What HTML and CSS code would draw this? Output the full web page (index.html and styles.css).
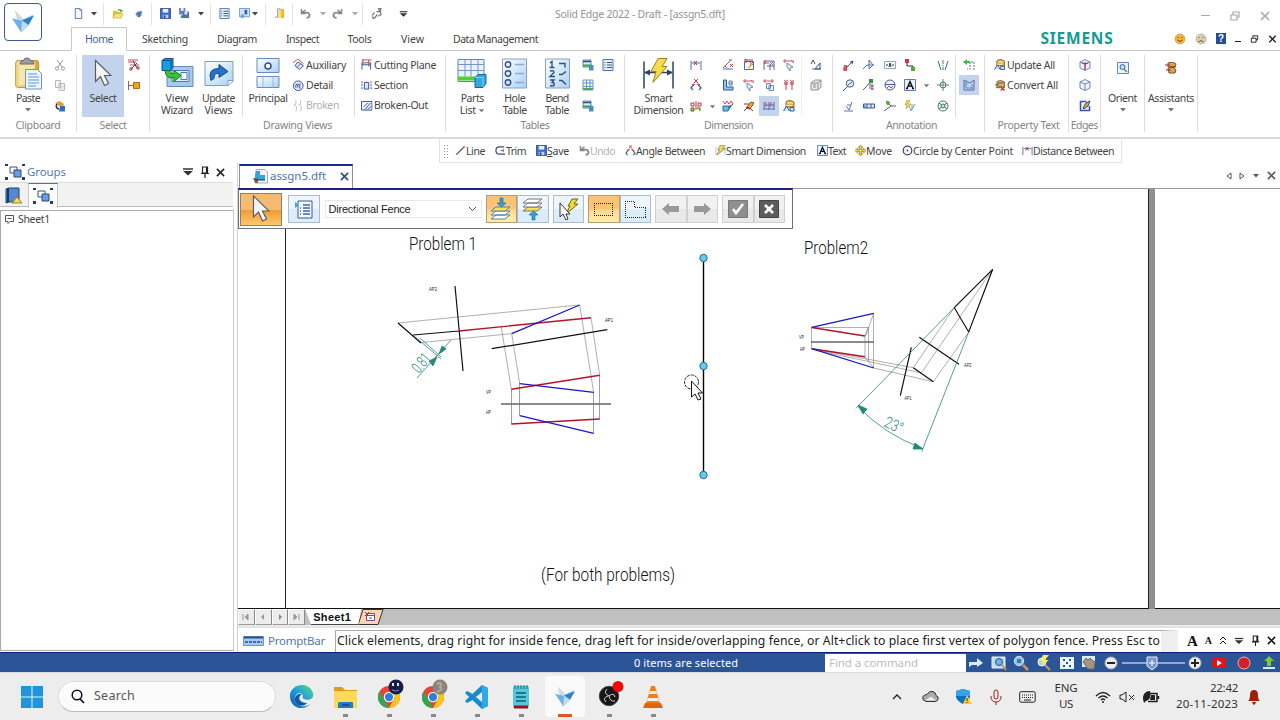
FILE: index.html
```html
<!DOCTYPE html>
<html lang="en">
<head>
<meta charset="utf-8">
<title>Solid Edge 2022 - Draft</title>
<link rel="stylesheet" href="styles.css">
</head>
<body>
<svg class="defs" width="0" height="0">
<defs>
<linearGradient id="g-blue" x1="0" y1="0" x2="1" y2="1"><stop offset="0" stop-color="#fff"/><stop offset="1" stop-color="#a9d2f3"/></linearGradient>
<linearGradient id="g-clip" x1="0" y1="0" x2="1" y2="0"><stop offset="0" stop-color="#f6df8c"/><stop offset="1" stop-color="#d3a63d"/></linearGradient>
<linearGradient id="g-edge" x1="0" y1="1" x2="1" y2="0"><stop offset="0" stop-color="#0c59a4"/><stop offset=".5" stop-color="#1b9de2"/><stop offset="1" stop-color="#5fdf78"/></linearGradient>
<symbol id="bird" viewBox="0 0 24 26"><path d="M3 0 13 10 9 25Z" fill="#d0dae2"/><path d="M0 9 12 12 10 24Z" fill="#69b1ee"/><path d="M11 11 23 5 18 17 10 24Z" fill="#8cc6f1"/><path d="M11 11 24 6 18 16Z" fill="#2f7fcb"/><path d="m11 12 7 5-8 8Z" fill="#c3dced"/></symbol>
<symbol id="down" viewBox="0 0 8 5"><path d="M1 1h6L4 4.4Z" fill="currentColor"/></symbol>
<symbol id="new" viewBox="0 0 12 12"><path d="M2.500.5h5l2 2v9h-7z" fill="#f4f9ff" stroke="#5573b5"/><path d="M7.500.5v2h2" fill="none" stroke="#5573b5"/></symbol>
<symbol id="open" viewBox="0 0 12 12"><path d="M1 3h4l1 1h4v7H1Z" fill="#e9c13f"/><path d="m3 6h9l-2 5H1Z" fill="#fbe27b" stroke="#b98a1c" stroke-width=".5"/><path d="M6 3q1-3 4-1V1l2 3H9V3Q8 2 6 3" fill="#36a536"/></symbol>
<symbol id="prev" viewBox="0 0 10 10"><path d="m1 5 3-3 5-1v6L6 9 3 8Z" fill="#6e98cd"/><path d="m3 4 3 1v4M6 5l3-3" stroke="#1e4373" fill="none"/></symbol>
<symbol id="save" viewBox="0 0 12 12"><path d="M.5.5h11v11H.5Z" fill="#3f6cc6" stroke="#33509f"/><path d="M3 1h6v4H3Z" fill="#e8effa"/><path d="M3 7.500h6V11H3Z" fill="#c0d4f3"/><path d="M4 8h2v3H4Z" fill="#23479a"/></symbol>
<symbol id="saveall" viewBox="0 0 12 12"><path d="M0 0h7v7H0Z" fill="#7385c1"/><path d="M2 0h3v3H2Z" fill="#eef"/><path d="M4 4h7v7H4Z" fill="#536eb3"/><path d="M6 4h3v3H6Z" fill="#eef"/><path d="M2 8v3h3l-1-1 2-2Z" fill="#2f9d3a"/></symbol>
<symbol id="list" viewBox="0 0 12 12"><path d="M1 .5h10v11H1Z" fill="#e3eefb" stroke="#5076ae"/><path d="M5 3.500h5M5 6h5M5 8.500h5M2.500 3.500h1M2.500 6h1M2.500 8.500h1" stroke="#35588d"/></symbol>
<symbol id="shot" viewBox="0 0 12 12"><path d="M.5.5h11v9H.5Z" fill="#cfe4fb" stroke="#6f95c9"/><path d="M6 2h3v5H6Z" fill="#2f62ad"/><path d="M2 7h4l-1 4H2Z" fill="#6aaae0"/></symbol>
<symbol id="book" viewBox="0 0 12 12"><path d="M6 1h5v10H6Z" fill="#efb62a"/><path d="M5 2h3v9H5Z" fill="#f9df70"/><path d="M1 10h3V1h3" stroke="#7f8cae" fill="none"/></symbol>
<symbol id="undo" viewBox="0 0 12 12"><path d="M1.500 5H7a3 3 0 0 1 2 5.500H7" fill="none" stroke="#85888c" stroke-width="2"/><path d="M1.500 1v5H6M2 5 6 2" stroke="#85888c" fill="none" stroke-width="1.500"/></symbol>
<symbol id="link" viewBox="0 0 12 12"><path d="m1 8 3-3M2 9v2h2l3-4M6 4h4l1 3-3 2M8 1l3-1-1 4Z" fill="none" stroke="#6f7276" stroke-width="1.300"/></symbol>
<symbol id="cut" viewBox="0 0 12 12"><path d="m3 1 5 7M9 1 4 8" stroke="#999ca0" fill="none"/><circle cx="3" cy="9.500" r="1.600" fill="none" stroke="#999ca0"/><circle cx="9" cy="9.500" r="1.600" fill="none" stroke="#999ca0"/></symbol>
<symbol id="copy" viewBox="0 0 12 12"><path d="M1.500 1.500h5v7h-5zM5 4.500h5.500v7H5z" fill="#f7f7f7" stroke="#b6b8ba"/><path d="M6.500 7h3M6.500 9h3" stroke="#c8c8c8"/></symbol>
<symbol id="brush" viewBox="0 0 12 12"><path d="m1 3 5-2 4 3-1 3-4-1Z" fill="#d9a336"/><path d="M3 4a3 3 0 0 0 2 5" stroke="#333" fill="none" stroke-width="1.500"/><path d="M6 6h5v5.500H5Z" fill="#2d72b8"/></symbol>
<symbol id="paste" viewBox="0 0 27 33"><rect x=".7" y="3.500" width="23" height="27" rx="2.500" fill="url(#g-clip)" stroke="#b99443"/><path d="M4 5h16l-1 23H4Z" fill="#f8e7ac"/><path d="M5 7q0-3 4-4 0-2 3-2t3 2q4 1 4 4Z" fill="#989da2" stroke="#686c71"/><path d="M10.500 12.500h12l4 4v15.500h-16z" fill="#ecf5ff" stroke="#7095bd"/><path d="M13 17h9M13 20h11M13 23h11M13 26h11M13 29h8" stroke="#8bb7e2" stroke-width="1.300"/></symbol>
<symbol id="cursor" viewBox="0 0 18 28"><path d="M1.500 1v21l5-5 4 9 4-2-4-8h6.500Z" fill="#f4f5f6" stroke="#5a5e63" stroke-width="1.200"/></symbol>
<symbol id="selred" viewBox="0 0 12 12"><path d="M0 1h10M0 3h8M2 6h9" stroke="#bd4c58"/><path d="m5 2 4 7M9 4 3 10" stroke="#3d4654"/><circle cx="3" cy="10" r="1.200" fill="none" stroke="#a23"/><circle cx="10" cy="9" r="1.200" fill="none" stroke="#a23"/></symbol>
<symbol id="selbox" viewBox="0 0 12 12"><path d="M.5 2v9M1 6.500h5" stroke="#a85a42"/><path d="M5.500 3.500h6v6h-6z" fill="#f4a11d" stroke="#b4691a"/></symbol>
<symbol id="wizard" viewBox="0 0 33 30"><path d="M6 8h26v20H6Z" fill="#a7cbed" stroke="#6587b9"/><path d="M11 12h17v11H11Z" fill="#deedfb" stroke="#5078b5"/><path d="M20 14h6v7h-6Z" fill="#fff" stroke="#4478b9"/><path d="M1 2 4 0h8v9l-2 3H1Z" fill="#1b9ce2" stroke="#134d86"/><path d="M1 2h9v9M10 2l2-2" fill="none" stroke="#064f88"/><path d="M4 12q1 9 9 7v4l7-6-7-5v3q-4 1-5-3Z" fill="#38c732" stroke="#157b1b"/></symbol>
<symbol id="update" viewBox="0 0 30 26"><path d="M1 1h28v20l-5 4H1Z" fill="url(#g-blue)" stroke="#8499cb"/><path d="M24 25v-5h5" fill="#fff" stroke="#8499cb"/><path d="M7 20Q3 8 15 8V4l9 7-9 6v-4q-5-1-5 5Z" fill="#2871c8" stroke="#174985"/></symbol>
<symbol id="principal" viewBox="0 0 24 30"><path d="M1 0h22v14H1Z" fill="url(#g-blue)" stroke="#6d87bf"/><circle cx="12" cy="7.500" r="3" fill="#fff" stroke="#304d90" stroke-width="1.500"/><path d="M1 18h22v11H1Z" fill="url(#g-blue)" stroke="#6d87bf"/><path d="M7 18v11M17 18v11" stroke="#9ab7df"/></symbol>
<symbol id="aux" viewBox="0 0 12 12"><path d="m5 3 6 4-4 4-5-4Z" fill="#d5e5fb" stroke="#3a539b"/><path d="m0 4 5-4 6 5M4 9l4-4" fill="none" stroke="#b0525f"/></symbol>
<symbol id="detail" viewBox="0 0 12 12"><circle cx="5.500" cy="6" r="5" fill="#e8f0fb" stroke="#354f9a"/><path d="M3 8V5l2-1M5 8V5l3-1M7 9V5" stroke="#354f9a" fill="none"/></symbol>
<symbol id="broken" viewBox="0 0 12 12"><path d="M3 0v4l-2 1 3 2-1 5M8 0v4L6 5l3 2-1 5" fill="none" stroke="#c0c0c0"/></symbol>
<symbol id="cutplane" viewBox="0 0 12 12"><path d="M1 11V4h9v7M1 6h9" fill="none" stroke="#374f94"/><path d="M1 1h10M2 0v5M8 1v7" stroke="#b24e5c"/></symbol>
<symbol id="section" viewBox="0 0 12 12"><path d="M1 1.500v9M10.500 1.500v9" stroke="#34509b" stroke-dasharray="2 1"/><path d="M3.500 2.500h4.500v7H3.500z" fill="#dce6fa" stroke="#34509b"/></symbol>
<symbol id="bout" viewBox="0 0 12 12"><path d="M.5 1.500h11v9H.5Z" fill="#edf4ff" stroke="#34509b"/><path d="m4 10 6-7M3 7l4-4M7 10l4-4" stroke="#34509b"/></symbol>
<symbol id="parts" viewBox="0 0 30 30"><path d="M1 1h26v22H1Z" fill="#e8f4ff" stroke="#5c84bd"/><path d="M1 6h26M1 12h26M8 1v17M14 1v17M21 1v17" stroke="#7695c7"/><path d="M1 18h17v4H1Z" fill="#51d22c"/><path d="M18 19l3-3h8v9l-3 4h-8Z" fill="#35a7e5" stroke="#176398"/><path d="M18 19h8v9" stroke="#7bd3fa" fill="none"/></symbol>
<symbol id="hole" viewBox="0 0 25 30"><path d="M.5.5h24v29H.5Z" fill="url(#g-blue)" stroke="#86a0d0"/><g fill="none" stroke="#344d85" stroke-width="1.400"><circle cx="6" cy="6" r="2.700"/><circle cx="6" cy="15" r="2.700"/><circle cx="6" cy="24" r="2.700"/></g><path d="M13 6h9M13 15h9M13 24h9" stroke="#8aa9d2" stroke-width="1.500"/></symbol>
<symbol id="bend" viewBox="0 0 25 30"><path d="M.5.5h24v29H.5Z" fill="url(#g-blue)" stroke="#86a0d0"/><g fill="none" stroke="#344d85" stroke-width="1.400"><path d="M5 4.500 7 3v6M4.500 9h5M5 12.500q4-1 4 1.500L5 18h5M5 21.500h4L7 24q3 0 2 3l-4 .5"/><path d="M14 5h6v4M14 16h3l4-3M14 22h3l4 4"/></g></symbol>
<symbol id="tbl" viewBox="0 0 12 12"><path d="M1 1h10v10H1Z" fill="#eaf7ef" stroke="#7097c4"/><path d="M1 4h10M1 7.500h10M4.500 1v10M8 1v10" stroke="#7097c4"/><path d="M1 9h10v2H1Z" fill="#4eae54"/></symbol>
<symbol id="tblr" viewBox="0 0 12 12"><path d="M1 1h8v7H1Z" fill="#d9ebf7" stroke="#6488b0"/><path d="M1 2.500h8" stroke="#344f78" stroke-width="1.500"/><path d="M1 5.500h9v2H1Z" fill="#3fa044"/><path d="M7 6h4.500v5.500H7Z" fill="#3f91c8"/></symbol>
<symbol id="smart" viewBox="0 0 31 32"><path d="M1 4v27M30 4v27M2 15h27" stroke="#2d4269" stroke-width="1.500"/><path d="m1 15 6-3v6ZM30 15l-6-3v6Z" fill="#2d4269"/><path d="M15 1h9l-5 8h5L10 25l3-11H8Z" fill="#f6dc4a" stroke="#a57f17"/></symbol>
<symbol id="dist" viewBox="0 0 12 12"><path d="M1 2v9M11 2v9M2 4h8" stroke="#536d9c" fill="none"/><path d="m4 2 3 4M7 2 4 6" stroke="#bd3143"/></symbol>
<symbol id="angle" viewBox="0 0 12 12"><path d="m4 5-3 4 2 2M8 5l3 4-2 2" fill="none" stroke="#466398" stroke-width="1.300"/><path d="m4 0 4 4M8 0 4 4M2 6l3-1M7 5l3 1" stroke="#c53b45"/></symbol>
<symbol id="coord" viewBox="0 0 12 12"><path d="M1 3h3v3H1zM6 1v9M8 3h3v3H8z" fill="none" stroke="#bd3143"/><path d="M1 8h3v3H1zM7 8h3v3" fill="#edb92e" stroke="#3d7038"/></symbol>
<symbol id="tri" viewBox="0 0 12 12"><path d="M1 9 8 2M1 10h10" stroke="#4971ae"/><path d="m8 5 3 3M11 5 8 8M7 1h3M3 7l2 2" stroke="#d33"/></symbol>
<symbol id="dimleaf" viewBox="0 0 12 12"><path d="M1.500 2.500h9v8h-9z" fill="#f0f5fc" stroke="#496ba5"/><path d="M1 1h9M3 0v4M7 3l3 3M10 3 7 6" stroke="#b33645"/><path d="m5 8 4-4 1 1-4 5Z" fill="#edbd38"/></symbol>
<symbol id="dimbox" viewBox="0 0 12 12"><path d="M1 11V2h10v9M4 7h7M7 5v6" fill="none" stroke="#4569a5"/><path d="M1 4h5M2 1v4M7 3l3 3M10 3 7 6" stroke="#c04a58"/></symbol>
<symbol id="dimarrow" viewBox="0 0 12 12"><path d="M0 2h11M2 0v4M8 1l3 3" stroke="#c95b65"/><path d="m4 4 6 4-3 1v3L4 8Z" fill="#e4edfa" stroke="#7788a1"/></symbol>
<symbol id="copydim" viewBox="0 0 12 12"><path d="M0 2h11M2 0v4M9 0v4" stroke="#c95b65"/><path d="M3.500 4.500h4v5h-4zM6 6.500h4.500v5H6z" fill="#eef3fb" stroke="#6d87b5"/></symbol>
<symbol id="chart" viewBox="0 0 12 12"><path d="M1.500 11V1h3v7H11v3Z" fill="#93c5ec" stroke="#245d9a"/><path d="M7 2h3v4H7zM7 4h4" fill="none" stroke="#6676a5"/></symbol>
<symbol id="redpins" viewBox="0 0 12 12"><path d="M3 3v8M9 3v8M1 5h4M7 5h4" stroke="#b33d47"/><path d="m1 1 4 3M5 1 1 4M7 1l4 3M11 1 7 4" stroke="#d35560"/></symbol>
<symbol id="xband" viewBox="0 0 12 12"><path d="m1 1 2 3 2-3 2 3 2-3 2 3" fill="none" stroke="#ce4651"/><path d="M1 6h8L6 11H1Z" fill="#6bb6e7" stroke="#2b6baa"/><path d="m6 8 5-4" stroke="#444"/></symbol>
<symbol id="xbrush" viewBox="0 0 12 12"><path d="m3 8 5-6 3 1-4 6Z" fill="#e6ad36" stroke="#735b35"/><path d="M1 4h5M1 11l4-4 5 4" stroke="#9d2634" fill="none"/></symbol>
<symbol id="dimtrack" viewBox="0 0 12 12"><path d="M1 10V2M6 2v8M11 2v8M1 9h10M2 5h9" stroke="#5966a8" fill="none"/><path d="M3 2v5M8 2v5" stroke="#bb5260"/></symbol>
<symbol id="props" viewBox="0 0 12 12"><path d="m3 2 3-2 5 2v5H3Z" fill="#dfaf55" stroke="#8b6d3f"/><path d="M4 3h6M3 5.500h6" stroke="#fff0a8"/><path d="m.5 11 3-5 3 5M7 7.500h4V11H7Z" fill="#cfe3ff" stroke="#3a5788"/></symbol>
<symbol id="convert" viewBox="0 0 12 12"><path d="m3 2 3-2 5 2v5H3Z" fill="#dfaf55" stroke="#8b6d3f"/><path d="M4 3h6M2 8h5M1 5h4" stroke="#4a5e83"/><path d="m7 7 4 4M11 7l-4 4" stroke="#c62c38" stroke-width="1.300"/></symbol>
<symbol id="letter" viewBox="0 0 12 12"><path d="m1 5 2-4 2 4M5 10l5-6v6Z" fill="none" stroke="#3e4c68"/><path d="M2 10h9" stroke="#3e65b5"/></symbol>
<symbol id="box" viewBox="0 0 12 12"><path d="m1 4 4-3h6v7l-3 3H1Z" fill="#e6e6e6" stroke="#909397"/><path d="M1 4h7v7M8 4l3-3M3 6h3M3 8h3" fill="none" stroke="#909397"/></symbol>
<symbol id="leader" viewBox="0 0 12 12"><path d="m4 8 6-6-3 1M10 2 9 5" stroke="#385d9a" fill="none"/><path d="M1 7h2.500v4H1V9h2.500" stroke="#c4313e" fill="none" stroke-width="1.300"/></symbol>
<symbol id="weld" viewBox="0 0 12 12"><path d="m0 10 4-4h7M6 1v9l4-4Z" fill="#edf3ff" stroke="#5473aa"/></symbol>
<symbol id="frame" viewBox="0 0 12 12"><path d="M.5 2.500h11v7H.5Z" fill="#f6f9ff" stroke="#90a5c4"/><path d="M2 6h2M8 6h2M5 8l1-4 1 4" stroke="#333" fill="none"/></symbol>
<symbol id="connect" viewBox="0 0 12 12"><path d="M3 3v4h6v3" fill="none" stroke="#272f45"/><path d="M1 0h4v4H1Z" fill="#c43b46"/><path d="M7 8h4v4H7Z" fill="#4eae31"/></symbol>
<symbol id="centerline" viewBox="0 0 12 12"><path d="m1 2 3 9M11 2 8 11" stroke="#4169b0"/><path d="M6 1v10" stroke="#31913c" stroke-dasharray="4 1 1 1"/></symbol>
<symbol id="balloon" viewBox="0 0 12 12"><circle cx="7" cy="4.500" r="3.700" fill="#e9f2ff" stroke="#37558b"/><path d="m5 7-5 5M5 6l4-3" stroke="#37558b"/></symbol>
<symbol id="datum" viewBox="0 0 12 12"><path d="m0 11 4-4 3-4v7M8 10h3M8 7h3" fill="none" stroke="#4765a4"/><path d="M6 0h4v4H6Z" fill="#379244"/><path d="M9 5v6" stroke="#c33"/></symbol>
<symbol id="target" viewBox="0 0 12 12"><circle cx="6" cy="6" r="5" fill="#edf2ff" stroke="#455f9b"/><path d="M1 5.500h10" stroke="#455f9b"/><path d="m3 9 2-2 2 2 2-2" stroke="#bd4450" fill="none"/></symbol>
<symbol id="text" viewBox="0 0 12 12"><path d="M.5.500h11v11H.5Z" fill="#e8f1fd" stroke="#5c7db4"/><path d="m3 9.500 3-7 3 7M4 7h4M2 9.500h2M8 9.500h2" fill="none" stroke="#111" stroke-width="1.400"/></symbol>
<symbol id="centermark" viewBox="0 0 12 12"><path d="M0 6h12M6 0v12" stroke="#569654"/><circle cx="6" cy="6" r="3" fill="none" stroke="#596d98"/></symbol>
<symbol id="surface" viewBox="0 0 12 12"><path d="M1 11h9M3 6l3 4 3-8M4 5h4" fill="none" stroke="#5575ad"/></symbol>
<symbol id="fcf" viewBox="0 0 12 12"><path d="M.5 4h11v4H.5Z" fill="#dbe8fc" stroke="#365798"/><path d="M4 4v4M8 4v4M1 5l2 3" stroke="#365798"/></symbol>
<symbol id="edgec" viewBox="0 0 12 12"><path d="m0 11 7-5-5-5M6 6h6" fill="none" stroke="#4a6284"/><circle cx="4" cy="3" r="2" fill="#48ad48"/></symbol>
<symbol id="bolts" viewBox="0 0 12 12"><path d="M3 0h3L4 4h3L2 9l1-4H1Z" fill="#f2d85c" stroke="#98812a" stroke-width=".5"/><path d="m5 6 2 5 4-7M8 4v5" stroke="#6ca6a0" fill="none"/></symbol>
<symbol id="boltcircle" viewBox="0 0 12 12"><circle cx="6" cy="6" r="5" fill="none" stroke="#4b6f94"/><path d="m2 3 8 6M2 9l8-6" stroke="#467b55"/><circle cx="6" cy="6" r="2" fill="#cce1d5" stroke="#467b55"/></symbol>
<symbol id="attach" viewBox="0 0 12 12"><path d="M5 3h6v8M7 3v7H4" fill="none" stroke="#6471a6" stroke-dasharray="2 1"/><path d="M0 3 4 0v2h3v2H4v2Z" fill="#42b942"/></symbol>
<symbol id="retrieve" viewBox="0 0 12 12"><path d="M1 1v10h10V1L7 4Z" fill="none" stroke="#5966a8"/><path d="M3 3v6h6M9 5v5" stroke="#6d7fb9" fill="none"/><path d="m1 2 4 3-4 3" fill="#59b2d0"/></symbol>
<symbol id="cubeedge" viewBox="0 0 12 12"><path d="M1 3 6 .5 11 3v6l-5 2.500L1 9ZM1 3l5 2 5-2M6 5v6" fill="#edf4ff" stroke="#7087bd"/></symbol>
<symbol id="rededge" viewBox="0 0 12 12"><path d="M1 3 6 .5 11 3v6l-5 2.500L1 9ZM1 3l5 2 5-2M6 5v6" fill="#edf4ff" stroke="#7087bd"/><path d="M6 3v8M3 4l3 1 3-1" fill="none" stroke="#bd3147" stroke-width="1.200"/></symbol>
<symbol id="paint" viewBox="0 0 12 12"><path d="M1.500 1.500h6M1.500 1v9.500h9V6" fill="#eaf2ff" stroke="#3a52a8" stroke-width="1.500"/><path d="m4 8 3-5 4-2-2 5-4 3Z" fill="#e2a53b" stroke="#304a71"/></symbol>
<symbol id="orient" viewBox="0 0 12 12"><path d="M.5.5h11v11H.5Z" fill="#e9f4ff" stroke="#5f87c2"/><circle cx="5.500" cy="5" r="2.500" fill="#b9e2ff" stroke="#3269a4"/><path d="m7 7 3 3" stroke="#b0763f" stroke-width="1.500"/></symbol>
<symbol id="assist" viewBox="0 0 12 12"><path d="m3 1 5-1 3 2-1 3H3ZM3 6l5-1 3 3-1 3H4Z" fill="#d7a34a" stroke="#7b542d"/><path d="M0 3h5M1 8h5M5 5h6" stroke="#a62f32"/></symbol>
<symbol id="line" viewBox="0 0 12 12"><path d="M2 10 10 2" stroke="#4a3e56" stroke-width="1.300"/><path d="M1 10h2M9 2h2" stroke="#e68743" stroke-width="2"/></symbol>
<symbol id="trim" viewBox="0 0 12 12"><path d="M10 2H5Q1 2 1 6t4 4h6" fill="none" stroke="#3a4998" stroke-width="1.300"/><path d="M6 6h3M9 4v4" stroke="#a34c6c"/></symbol>
<symbol id="flash" viewBox="0 0 12 12"><path d="M1 2v9M11 2v9" stroke="#b3bdcc"/><path d="M6 0h5L8 4h3L2 11l3-6H3Z" fill="#eddc59" stroke="#756c40" stroke-width=".7"/></symbol>
<symbol id="move" viewBox="0 0 12 12"><path d="m6 0 2.500 2.500H7V5h2.500V3.500L12 6 9.500 8.500V7H7v2.500h1.500L6 12 3.500 9.500H5V7H2.500v1.500L0 6l2.500-2.500V5H5V2.500H3.500Z" fill="#efd847" stroke="#786c2b" stroke-width=".7"/></symbol>
<symbol id="circle" viewBox="0 0 12 12"><circle cx="6" cy="6" r="4.700" fill="none" stroke="#344279" stroke-width="1.300"/><path d="M6 5v2" stroke="#c33" stroke-width="2"/></symbol>
<symbol id="groups" viewBox="0 0 20 16"><path d="M5 3h7v6H5Z" fill="#fff" stroke="#334e81"/><path d="M9 6h7v7H9Z" fill="#6a9fdb" stroke="#264985"/><path d="M0 0h3v2H0zM17 0h3v2h-3zM0 13h3v3H0zM17 13h3v3h-3z" fill="#243b72"/></symbol>
<symbol id="library" viewBox="0 0 18 18"><path d="m1 2 3-1h10v14H4l-3 1Z" fill="#5489cb" stroke="#20427e"/><path d="M3 1v14" stroke="#17366a" stroke-width="2"/><path d="m7 16 5-6 5 6Z" fill="#f6db42" stroke="#9b8330"/></symbol>
<symbol id="pin" viewBox="0 0 10 12"><path d="M2.500 1h5v6h-5zM1 7.500h8M5 8v4M6.500 1v6" fill="none" stroke="#222" stroke-width="1.200"/></symbol>
<symbol id="menu" viewBox="0 0 12 8"><path d="M1 1h10" stroke="#333" stroke-width="1.500"/><path d="M1 3h10L6 7.500Z" fill="#333"/></symbol>
<symbol id="x" viewBox="0 0 10 10"><path d="m1 1 8 8M9 1 1 9" stroke="currentColor" stroke-width="1.700"/></symbol>
<symbol id="restore" viewBox="0 0 10 10"><path d="M1 4h6v5H1ZM3 4V1h6v5H7" fill="none" stroke="currentColor" stroke-width="1.200"/></symbol>
<symbol id="layerd" viewBox="0 0 24 24"><g fill="#fff" stroke="#5c7da7"><path d="m2 22 5-4h14l-5 4ZM2 18l5-4h14l-5 4Z"/><path d="m2 14 5-4h14l-5 4Z" fill="#ffe346"/></g><path d="M11 1h3v5h3l-4.500 4L8 6h3Z" fill="#32a0df" stroke="#25608e" stroke-width=".6"/></symbol>
<symbol id="layeru" viewBox="0 0 24 24"><g fill="#fff" stroke="#73777d"><path d="m2 14 5-4h14l-5 4Z" fill="#ffe346"/><path d="m2 10 5-4h14l-5 4ZM2 6l5-4h14l-5 4Z"/></g><path d="M11 23h3v-5h3l-4.500-4L8 18h3Z" fill="#32a0df" stroke="#25608e" stroke-width=".6"/></symbol>
<symbol id="selflash" viewBox="0 0 24 24"><path d="M16 2h6l-4 5h4L10 17l4-8h-2Z" fill="#f1da32" stroke="#6d6124"/><path d="M4 6v14l3-3 3 6 2-1-2-5h4Z" fill="#fff" stroke="#333"/></symbol>
<symbol id="chrome" viewBox="0 0 24 24"><circle cx="12" cy="12" r="12" fill="#e84436"/><path d="M1.500 6 8 16l4 8A12 12 0 0 1 1.500 6" fill="#31a653"/><path d="M12 24l6-11-2-6h7A12 12 0 0 1 12 24" fill="#fbc619"/><circle cx="12" cy="12" r="5.700" fill="#fff"/><circle cx="12" cy="12" r="4.500" fill="#307de2"/></symbol>
</defs>
</svg>

<div class="app">
<header class="head">
  <div class="logo"><svg width="24" height="26"><use href="#bird"/></svg></div>
  <div class="headmain">
    <div class="titlebar">
      <div class="quick">
        <span class="q w14"><svg><use href="#new"/></svg></span><span class="q w21"><svg class="d"><use href="#down"/></svg></span><i></i>
        <span class="q w26"><svg><use href="#open"/></svg></span><span class="q w16"><svg class="s10"><use href="#prev"/></svg></span><span class="w5"></span><i></i>
        <span class="q w26"><svg><use href="#save"/></svg></span><span class="q w12"><svg><use href="#saveall"/></svg></span><span class="q w19"><svg class="d"><use href="#down"/></svg></span><i></i>
        <span class="q w26"><svg><use href="#list"/></svg></span><span class="q w14"><svg><use href="#shot"/></svg></span><span class="q w14b"><svg class="d"><use href="#down"/></svg></span><i></i>
        <span class="q w26"><svg><use href="#book"/></svg></span><i></i>
        <span class="q w24"><svg><use href="#undo"/></svg></span><span class="q w10"><svg class="d pale"><use href="#down"/></svg></span><span class="q w20"><svg class="flip"><use href="#undo"/></svg></span><span class="q w15"><svg class="d pale"><use href="#down"/></svg></span><i></i>
        <span class="q w26"><svg><use href="#link"/></svg></span><span class="q w29"><svg class="s10"><use href="#menu"/></svg></span>
      </div>
      <div class="title"><span data-w="170">Solid Edge 2022 - Draft - [assgn5.dft]</span></div>
      <div class="winbtns"><span class="min"></span><svg><use href="#restore"/></svg><svg><use href="#x"/></svg></div>
    </div>
    <div class="tabs">
      <div class="tab home"><span data-w="28">Home</span></div>
      <div class="tab t2"><span data-w="46">Sketching</span></div>
      <div class="tab t3"><span data-w="40">Diagram</span></div>
      <div class="tab t4"><span data-w="33">Inspect</span></div>
      <div class="tab t5"><span data-w="24">Tools</span></div>
      <div class="tab t6"><span data-w="23">View</span></div>
      <div class="tab t7"><span data-w="85">Data Management</span></div>
      <div class="brand"><span data-w="73">SIEMENS</span></div>
      <div class="docbtns">
        <svg viewBox="0 0 12 12"><circle cx="6" cy="6" r="5" fill="#f1b53c" stroke="#c78f3b" stroke-width=".6"/><path d="M3.500 7q2.500 3 5 0M4 4v1M8 4v1" fill="none" stroke="#67430e"/></svg>
        <svg viewBox="0 0 12 12"><circle cx="6" cy="6" r="5" fill="#d9ceb1" stroke="#a99b7b" stroke-width=".6"/><path d="M3.500 9q2.500-3 5 0M4 4v1M8 4v1" fill="none" stroke="#65583f"/></svg>
        <span class="help">?</span><span class="min"></span><svg class="s8"><use href="#restore"/></svg><svg class="s8"><use href="#x"/></svg>
      </div>
    </div>
  </div>
</header>

<section class="ribbon">
  <div class="grp clip"><div class="body"><div class="big w56"><svg width="27" height="33"><use href="#paste"/></svg><span data-w="24">Paste</span><svg class="d"><use href="#down"/></svg></div><div class="col"><svg><use href="#cut"/></svg><svg><use href="#copy"/></svg><svg><use href="#brush"/></svg></div></div><label><span data-w="45">Clipboard</span></label></div>
  <div class="grp sel"><div class="body"><div class="big picked"><svg width="18" height="28"><use href="#cursor"/></svg><span data-w="27">Select</span></div><div class="col"><svg><use href="#selred"/></svg><svg><use href="#selbox"/></svg></div></div><label><span data-w="27">Select</span></label></div>
  <div class="grp views"><div class="body">
    <div class="big w46"><svg width="33" height="30"><use href="#wizard"/></svg><span data-w="23">View</span><span data-w="32">Wizard</span></div>
    <div class="big w46u"><svg width="30" height="26"><use href="#update"/></svg><span data-w="33">Update</span><span data-w="28">Views</span></div><i class="in"></i>
    <div class="big w49"><svg width="24" height="30"><use href="#principal"/></svg><span data-w="39">Principal</span></div>
    <div class="rows r1"><p><svg><use href="#aux"/></svg><span data-w="40">Auxiliary</span></p><p><svg><use href="#detail"/></svg><span data-w="27">Detail</span></p><p class="off"><svg><use href="#broken"/></svg><span data-w="33">Broken</span></p></div><i class="in"></i>
    <div class="rows r2"><p><svg><use href="#cutplane"/></svg><span data-w="62">Cutting Plane</span></p><p><svg><use href="#section"/></svg><span data-w="34">Section</span></p><p><svg><use href="#bout"/></svg><span data-w="54">Broken-Out</span></p></div>
  </div><label><span data-w="69">Drawing Views</span></label></div>
  <div class="grp tables"><div class="body">
    <div class="big w43"><svg width="30" height="30"><use href="#parts"/></svg><span data-w="23">Parts</span><b><span data-w="16">List</span><svg class="d"><use href="#down"/></svg></b></div>
    <div class="big w43"><svg width="25" height="30"><use href="#hole"/></svg><span data-w="21">Hole</span><span data-w="24">Table</span></div>
    <div class="big w41"><svg width="25" height="30"><use href="#bend"/></svg><span data-w="23">Bend</span><span data-w="24">Table</span></div>
    <div class="col"><svg><use href="#tblr"/></svg><svg><use href="#tbl"/></svg><svg><use href="#tblr"/></svg></div><div class="col"><svg><use href="#list"/></svg></div>
  </div><label><span data-w="29">Tables</span></label></div>
  <div class="grp dims"><div class="body">
    <div class="big w61"><svg width="31" height="32"><use href="#smart"/></svg><span data-w="28">Smart</span><span data-w="50">Dimension</span></div>
    <div class="col"><svg><use href="#dist"/></svg><svg><use href="#angle"/></svg><svg><use href="#coord"/></svg></div>
    <div class="col arrows"><u></u><u></u><svg class="d"><use href="#down"/></svg></div>
    <div class="col"><svg><use href="#tri"/></svg><svg><use href="#chart"/></svg><svg><use href="#xband"/></svg></div>
    <div class="col"><svg><use href="#dimleaf"/></svg><svg><use href="#dimarrow"/></svg><svg><use href="#xbrush"/></svg></div>
    <div class="col"><svg><use href="#dimbox"/></svg><svg><use href="#copydim"/></svg><em><svg><use href="#dimtrack"/></svg></em></div>
    <div class="col"><svg><use href="#dimarrow"/></svg><svg><use href="#redpins"/></svg><svg><use href="#props"/></svg></div><i class="in faint"></i>
    <div class="col last"><svg><use href="#letter"/></svg><svg><use href="#box"/></svg></div>
  </div><label><span data-w="49">Dimension</span></label></div>
  <div class="grp anno"><div class="body">
    <div class="col"><svg><use href="#leader"/></svg><svg><use href="#balloon"/></svg><svg><use href="#surface"/></svg></div>
    <div class="col"><svg><use href="#weld"/></svg><svg><use href="#datum"/></svg><svg><use href="#fcf"/></svg></div>
    <div class="col"><svg><use href="#frame"/></svg><svg><use href="#target"/></svg><svg><use href="#edgec"/></svg></div>
    <div class="col"><svg><use href="#connect"/></svg><svg><use href="#text"/></svg><svg><use href="#bolts"/></svg></div>
    <div class="col arrows"><u></u><svg class="d"><use href="#down"/></svg></div>
    <div class="col"><svg><use href="#centerline"/></svg><svg><use href="#centermark"/></svg><svg><use href="#boltcircle"/></svg></div><i class="in"></i>
    <div class="col last"><svg><use href="#attach"/></svg><em><svg><use href="#retrieve"/></svg></em></div>
  </div><label><span data-w="51">Annotation</span></label></div>
  <div class="grp ptext"><div class="body"><div class="rows"><p><svg><use href="#props"/></svg><span data-w="48">Update All</span></p><p><svg><use href="#convert"/></svg><span data-w="51">Convert All</span></p></div></div><label><span data-w="62">Property Text</span></label></div>
  <div class="grp edges"><div class="body"><div class="col"><svg><use href="#rededge"/></svg><svg><use href="#cubeedge"/></svg><svg><use href="#paint"/></svg></div></div><label><span data-w="27">Edges</span></label></div>
  <div class="grp orient"><div class="body"><div class="big"><svg width="12" height="12"><use href="#orient"/></svg><span data-w="29">Orient</span><svg class="d"><use href="#down"/></svg></div></div></div>
  <div class="grp assist"><div class="body"><div class="big"><svg width="12" height="12"><use href="#assist"/></svg><span data-w="46">Assistants</span><svg class="d"><use href="#down"/></svg></div></div></div>
</section>

<nav class="quickbar"><div class="qb">
  <span class="grip"></span>
  <p class="b1"><svg><use href="#line"/></svg><span data-w="19">Line</span></p><p class="b2"><svg><use href="#trim"/></svg><span data-w="20">Trim</span></p><p class="b3"><svg><use href="#save"/></svg><span data-w="22"><ins>S</ins>ave</span></p><p class="b4 off"><svg><use href="#undo"/></svg><span data-w="25">Undo</span></p><p class="b5"><svg><use href="#angle"/></svg><span data-w="69">Angle Between</span></p><p class="b6"><svg><use href="#flash"/></svg><span data-w="80">Smart Dimension</span></p><p class="b7"><svg><use href="#text"/></svg><span data-w="18">Text</span></p><p class="b8"><svg><use href="#move"/></svg><span data-w="26">Move</span></p><p class="b9"><svg><use href="#circle"/></svg><span data-w="100">Circle by Center Point</span></p><p class="b10"><svg><use href="#dist"/></svg><span data-w="81">Distance Between</span></p>
</div></nav>

<main class="work">
  <aside class="pane">
    <div class="phead"><svg width="20" height="16"><use href="#groups"/></svg><span data-w="39">Groups</span><div class="pbtn"><svg width="12" height="8"><use href="#menu"/></svg><svg width="10" height="12"><use href="#pin"/></svg><svg width="9" height="9"><use href="#x"/></svg></div></div>
    <div class="ptabs"><div class="pt"><svg width="18" height="18"><use href="#library"/></svg></div><div class="pt on"><svg width="20" height="16"><use href="#groups"/></svg></div></div>
    <div class="tree"><svg width="9" height="9" viewBox="0 0 9 9"><path d="M.5.5h8v6H5L3 8.500v-2H.5ZM2.500 3.500h4" fill="#fff" stroke="#555"/></svg><span data-w="32">Sheet1</span></div>
  </aside>
  <section class="doc">
    <div class="doctabs"><div class="dtab"><svg width="15" height="15" viewBox="0 0 15 15"><path d="M3 .5h9l2.500 2.500v11h-12Z" fill="#eef5fb" stroke="#9fb0be"/><path d="M3 2h4v4h5v5H2V7Z" fill="#29a7e0"/><path d="M0 9h5v5H2Z" fill="#7b6954"/><path d="M2 11h10" stroke="#333"/></svg><span data-w="56">assgn5.dft</span><svg class="cls" width="9" height="9"><use href="#x"/></svg></div>
      <div class="dnav"><svg width="6" height="8" viewBox="0 0 6 8"><path d="M5 1v6L1 4Z" fill="none" stroke="#555"/></svg><svg width="6" height="8" viewBox="0 0 6 8"><path d="M1 1v6l4-3Z" fill="none" stroke="#555"/></svg><svg width="8" height="5"><use href="#down"/></svg><svg width="9" height="9"><use href="#x"/></svg></div>
    </div>
    <div class="canvas">
      <svg class="drawing" width="1042" height="420" viewBox="238 189 1042 420">
        <path d="M285.500 228v381M1148.500 189v420" stroke="#222"/><path d="M1149 189h6v420h-6z" fill="#8f8f8f"/>
        <g class="cadt" stroke="none"><text x="409" y="249.500" textLength="68" lengthAdjust="spacingAndGlyphs">Problem 1</text><text x="804" y="254" textLength="64" lengthAdjust="spacingAndGlyphs">Problem2</text><text x="541" y="580.500" textLength="134" lengthAdjust="spacingAndGlyphs">(For both problems)</text></g>
        <g stroke="#8c8c8c" fill="none" stroke-width=".7"><path d="m398 323 181-18M421 342.600l90.700-9M501.300 327l10 62.300M511.700 333.700l8 50M579.700 305l14 87.500M591 317.700l8.700 57.600"/><path d="M511.500 389v35M519.500 383v33M593.500 392v41M599.500 375v44" stroke="#777"/>
        <path d="M811.500 327v22M811.700 327.500H868.500V361M865 336v21M868 327l-3 9M873.500 313v55M873.700 313.300l-8 22.700M865 357l8.700 11M811.700 348.700l101.600 19M815 350l107 23M873.700 368l59.600 13.700M992.700 269.300 922 372M954.300 307.700l-41 60M968.700 332l-35.400 49.700"/></g>
        <g stroke="#111" stroke-width="1.200" fill="none"><path d="m455 286 8 85M398 323l23 20M413 335l46-4M491.700 348.700l115.600-19M911.300 347.300l-11 48.400M919.300 337.300l39.700 27M913.300 367.700l20 14M992.700 269.300l-38.400 38.400 14.400 24.300Z"/></g>
        <path d="M501 404h110M811 342h63" stroke="#666" stroke-width="1.600"/>
        <g stroke="#b5122b" stroke-width="1.400"><path d="m459 331 132-13.300M511.300 389.300l88.400-14M511.300 424l88.400-5M811.700 327.500l53.300 8.500M811.700 348.700l53.300 8"/></g>
        <g stroke="#1818c8" stroke-width="1.300"><path d="m511.700 333.700 68-28.700M519.700 383.700l74 8.600M519.700 415.700l74 17.600M811.700 327.300l62-14M811.700 348.700l62 19.300"/></g>
        <g stroke="#27877c" fill="none" stroke-width=".8"><path d="m417 378 34-38M413 335l28 24M420 338l21 19M954.300 307.700 856 408.300M968.700 332l-47 119.700M858 406.500Q884 434 922.500 448.500"/><path d="m439 354 3-8 4 3ZM437 357l-8 4 4 5ZM858 405l9 4-4 5ZM923 449l-8-6-2 6Z" fill="#27877c"/></g>
        <g fill="#27877c"><text class="dim" transform="translate(419 374) rotate(-50)" textLength="20" lengthAdjust="spacingAndGlyphs">0.81</text><text class="dim" transform="translate(883 426) rotate(25)" font-style="italic" textLength="19" lengthAdjust="spacingAndGlyphs">23°</text></g>
        <g class="tiny"><text x="429" y="291" textLength="8" lengthAdjust="spacingAndGlyphs">AP2</text><text x="605" y="322" textLength="8" lengthAdjust="spacingAndGlyphs">AP1</text><text x="486" y="394" textLength="5" lengthAdjust="spacingAndGlyphs">VP</text><text x="486" y="414" textLength="5" lengthAdjust="spacingAndGlyphs">HP</text><text x="799" y="339" textLength="5" lengthAdjust="spacingAndGlyphs">VP</text><text x="800" y="351" textLength="5" lengthAdjust="spacingAndGlyphs">HP</text><text x="964" y="367" textLength="7.500" lengthAdjust="spacingAndGlyphs">AP2</text><text x="904.500" y="400" textLength="7" lengthAdjust="spacingAndGlyphs">AP1</text></g>
        <path d="M703.500 258v217" stroke="#000" stroke-width="1.400"/><g fill="#66c9f5" stroke="#276b8c"><circle cx="703.500" cy="258" r="3.700"/><circle cx="703.500" cy="366" r="3.700"/><circle cx="703.500" cy="475" r="3.700"/></g>
        <circle cx="691.500" cy="382" r="7" fill="none" stroke="#222" stroke-dasharray="3 1"/><path d="M691.500 381v16l3.500-3 3 6 3-1-3-6h4.500Z" fill="#fff" stroke="#111"/>
      </svg>
      <div class="cmdbar">
        <span class="cb active"><svg width="18" height="28"><use href="#cursor"/></svg></span>
        <span class="cb opt"><svg width="20" height="21" viewBox="0 0 20 21"><path d="M4 2h14v17H4Z" fill="#f0f6ff" stroke="#3b5694"/><path d="M9 6h7M9 9h7M9 12h7M9 15h7M6 9h1M6 12h1M6 15h1" stroke="#49659d" stroke-width="1.300"/><path d="m1 3 4 3-4 3Z" fill="#2fa8d9"/></svg></span>
        <span class="combo"><span data-w="82">Directional Fence</span><svg width="9" height="6" viewBox="0 0 9 6"><path d="m1 1 3.500 3.500L8 1" fill="none" stroke="#555"/></svg></span>
        <span class="pair"><span class="cb on"><svg width="24" height="24"><use href="#layerd"/></svg></span><span class="cb"><svg width="24" height="24"><use href="#layeru"/></svg></span></span>
        <span class="cb solo"><svg width="24" height="24"><use href="#selflash"/></svg></span>
        <span class="pair"><span class="cb on"><span class="fence"></span></span><span class="cb"><svg class="crisp" width="21" height="17" viewBox="0 0 21 17"><path d="M0 .5h9M9.500 1v6M10 6.500h11M20.500 7v10M0 16.500h21M.5 0v17" fill="none" stroke="#1a2a44" stroke-dasharray="1 1"/></svg></span></span>
        <span class="pair p3"><span class="cb dis"><svg width="18" height="14" viewBox="0 0 18 14"><path d="m0 7 7-6v3h10v6H7v3Z" fill="#999"/></svg></span><span class="cb dis"><svg class="flip" width="18" height="14" viewBox="0 0 18 14"><path d="m0 7 7-6v3h10v6H7v3Z" fill="#999"/></svg></span></span>
        <span class="pair p4"><span class="cb dis"><svg width="20" height="18" viewBox="0 0 20 18"><path d="M.5.5h19v17H.5Z" fill="#8f8f8f" stroke="#777"/><path d="m5 9 3 4 7-9" fill="none" stroke="#fff" stroke-width="2.600"/></svg></span><span class="cb dis"><svg width="20" height="18" viewBox="0 0 20 18"><path d="M.5.5h19v17H.5Z" fill="#5c5c5c" stroke="#444"/><path d="m6 5 8 8M14 5l-8 8" stroke="#fff" stroke-width="2.600"/></svg></span></span>
      </div>
    </div>
    <div class="sheets">
      <span class="sn"><svg viewBox="0 0 8 8"><path d="M1 1v6M6 1v6L3 4Z" fill="#999" stroke="#999"/></svg></span><span class="sn"><svg viewBox="0 0 8 8"><path d="M5 1v6L2 4Z" fill="#999"/></svg></span><span class="sn"><svg viewBox="0 0 8 8"><path d="M3 1v6l3-3Z" fill="#888"/></svg></span><span class="sn"><svg viewBox="0 0 8 8"><path d="M6 1v6M1 1v6l3-3Z" fill="#999" stroke="#999"/></svg></span>
      <div class="stab"><span data-w="38">Sheet1</span></div>
      <svg class="addtab" width="28" height="16" viewBox="0 0 28 16"><path d="M0 16 5 .5h20L20 15.500H1" fill="#fbd5b5" stroke="#333"/><path d="M8.500 4.500h8v7h-8zM9 6.500h7M11 9h3" fill="#fff" stroke="#6d4a91"/><path d="m7 3 4 4M11 3 7 7" stroke="#d22"/></svg>
    </div>
    <div class="prompt"><svg width="21" height="10" viewBox="0 0 21 10"><path d="M.5.5h20v9H.5Z" fill="#a7caf1" stroke="#6e93c1"/><path d="M1 1.500h19" stroke="#2a528f" stroke-width="2"/><path d="M2 6h17" stroke="#426ca4" stroke-width="2" stroke-dasharray="3 1"/></svg><span class="pl"><span data-w="57">PromptBar</span></span>
      <div class="ptxt"><span data-w="823">Click elements, drag right for inside fence, drag left for inside/overlapping fence, or Alt+click to place first vertex of polygon fence. Press Esc to</span></div>
      <div class="pctl"><span class="fa big1">A</span><span class="fa">A</span><svg width="8" height="9" viewBox="0 0 8 9"><path d="m1 4 3-3 3 3M1 8l3-3 3 3" fill="none" stroke="#111"/></svg><svg width="10" height="8"><use href="#menu"/></svg><svg width="9" height="11"><use href="#pin"/></svg><svg width="9" height="9"><use href="#x"/></svg></div>
    </div>
  </section>
</main>

<footer class="status"><span class="count"><span data-w="104">0 items are selected</span></span><div class="find"><span data-w="89">Find a command</span></div>
  <div class="stools">
    <svg width="16" height="12" viewBox="0 0 16 12"><path d="M1 10V5h8V1l6 5-6 4V8H4Z" fill="#d7edff"/></svg>
    <svg width="16" height="16" viewBox="0 0 16 16"><path d="M1 2h13v11H1Z" fill="#bddaf7" stroke="#e7f3ff"/><circle cx="8" cy="7" r="3.500" fill="#75aee2" stroke="#245689"/><path d="m11 10 4 5" stroke="#c98a57" stroke-width="2"/></svg>
    <svg width="16" height="16" viewBox="0 0 16 16"><circle cx="6" cy="6" r="4.700" fill="#91c5f1" stroke="#d7e8f8" stroke-width="1"/><path d="M4 4h4v4H4Z" fill="#3d77b1"/><path d="m10 10 5 5" stroke="#db9259" stroke-width="2.500"/></svg>
    <svg width="16" height="16" viewBox="0 0 16 16"><circle cx="6" cy="7" r="4" fill="#acd0ec" stroke="#f2f6fb"/><path d="M7 0h6L9 5h4L5 11l2-5H4Z" fill="#f2ed70"/><path d="m9 10 5 5" stroke="#db9259" stroke-width="2"/></svg>
    <svg width="16" height="14" viewBox="0 0 16 14"><path d="M1 1h14v12H1Z" fill="#e9f5ff"/><path d="M4 3h2v2H4zM10 3h2v2h-2zM7 6h2v2H7zM4 9h2v2H4zM10 9h2v2h-2z" fill="#27578f"/></svg>
    <svg width="16" height="15" viewBox="0 0 16 15"><path d="M1 1h13v11H1Z" fill="#dceeff"/><path d="M2 7 5 3l2 2 2-2 2 2 3 2-1 7H7Z" fill="#a5947e" stroke="#6f6961"/></svg>
    <svg width="14" height="14" viewBox="0 0 14 14"><circle cx="7" cy="7" r="6" fill="#eee" stroke="#acb5c1"/><path d="M3 7h8" stroke="#222" stroke-width="2"/></svg>
    <svg class="slider" width="63" height="16" viewBox="0 0 63 16"><path d="M0 8h63" stroke="#fff"/><path d="M25 2h10v9l-5 4-5-4Z" fill="#7997cb" stroke="#eef"/><path d="M30 5v6M27 8h6" stroke="#fff"/></svg>
    <svg width="14" height="14" viewBox="0 0 14 14"><circle cx="7" cy="7" r="6" fill="#eee" stroke="#acb5c1"/><path d="M3 7h8M7 3v8" stroke="#222" stroke-width="2"/></svg>
    <svg width="14" height="10" viewBox="0 0 14 10"><rect width="14" height="10" rx="2" fill="#e6111b"/><path d="m5 2 5 3-5 3Z" fill="#fff"/></svg>
    <svg width="14" height="14" viewBox="0 0 14 14"><circle cx="7" cy="7" r="6" fill="#d51f29" stroke="#e9b1ae"/></svg>
    <svg width="14" height="14" viewBox="0 0 14 14"><path d="m7 0 5 5H9v5H5V5H2Z" fill="#7bcb36"/><path d="M1 12h12" stroke="#dceaf6" stroke-width="2"/></svg>
  </div>
</footer>

<footer class="taskbar">
  <svg class="win" width="24" height="24" viewBox="0 0 24 24"><path d="M1 1h10.500v10.500H1zM12.500 1H23v10.500H12.500zM1 12.500h10.500V23H1zM12.500 12.500H23V23H12.500z" fill="#1c96dc"/></svg>
  <div class="search"><svg width="14" height="15" viewBox="0 0 14 15"><circle cx="6" cy="6" r="4.800" fill="none" stroke="#111" stroke-width="1.500"/><path d="m9 10 4 4" stroke="#111" stroke-width="1.700"/></svg><span data-w="41">Search</span></div>
  <div class="apps">
    <span class="app1 none"><svg width="25" height="25" viewBox="0 0 25 25"><path d="M1 13C0 0 20-4 24 9c2 6-5 8-9 6-3-1 0-3-2-5-3-3-8 1-7 6 1 5 6 7 10 6 3 0 5-2 6-3-5 8-20 7-21-6" fill="url(#g-edge)"/><path d="M6 17c-1-5 3-8 7-7-5 3-3 9 5 9-3 4-10 4-12-2" fill="#115aa7"/></svg></span>
    <span class="app1"><svg width="25" height="23" viewBox="0 0 25 23"><path d="M1 1h8l3 3h12v18H1Z" fill="#d99e17"/><path d="M1 5h23v17H1Z" fill="#ffd95a"/><path d="M5 22v-5q0-1 2-1h11q2 0 2 1v5" fill="#207ac8"/><path d="M9 19h7" stroke="#10518b" stroke-width="2"/></svg></span>
    <span class="app1"><svg width="32" height="30" viewBox="0 0 32 30"><use href="#chrome" x="5" y="6" width="22" height="24"/><circle cx="23" cy="8" r="7.500" fill="#171e46"/><path d="M19 4h2v3h-2zM24 4h2v3h-2z" fill="#dde5ff"/><path d="M19 11q4 2 7 0" fill="none" stroke="#7584bb"/></svg></span>
    <span class="app1"><svg width="32" height="30" viewBox="0 0 32 30"><use href="#chrome" x="5" y="6" width="22" height="24"/><circle cx="23" cy="8" r="7.500" fill="#8d8678"/><path d="M20 5q6-3 3 3 4 2-3 5" fill="none" stroke="#b1aa9d" stroke-width="2"/></svg></span>
    <span class="app1"><svg width="24" height="24" viewBox="0 0 24 24"><path d="m17 0 6 3v18l-6 3L2 10 0 8l2-2 4 2 11 9V7L6 16l-4 2-2-2L2 14Z" fill="#168ccf"/><path d="m17 0 6 3v18l-6 3Z" fill="#32a8e9"/></svg></span>
    <span class="app1"><svg width="18" height="25" viewBox="0 0 18 25"><rect x="1" y="2" width="16" height="22" rx="2" fill="#55c9dc"/><path d="M3 1v4M6 1v4M9 1v4M12 1v4M15 1v4" stroke="#17647e"/><path d="M4 9h10M4 13h10M4 17h10" stroke="#125e75" stroke-width="1.500"/><path d="M2 23h14" stroke="#a00e1d" stroke-width="3"/></svg></span>
    <span class="app1 cur"><svg width="20" height="24"><use href="#bird"/></svg></span>
    <span class="app1"><svg width="28" height="30" viewBox="0 0 28 30"><circle cx="14" cy="17" r="9.700" fill="#171717" stroke="#444"/><path d="M12 10q-4 4 2 7 5-4 6 1M13 17q-6 2-2 6M14 17q1 6 6 5" fill="none" stroke="#ccc" stroke-width="1"/><circle cx="23" cy="7.500" r="5.500" fill="#f00a0a"/></svg></span>
    <span class="app1"><svg width="22" height="24" viewBox="0 0 22 24"><path d="m9 1 4 0 5 18H4Z" fill="#f57d15"/><path d="m8 6h6l1 3H7ZM6 13h10l1 3H5Z" fill="#f4f4f4"/><path d="M3 18h16l2 5H1Z" fill="#e36507"/></svg></span>
  </div>
  <div class="tray">
    <svg class="y1" width="10" height="6" viewBox="0 0 10 6"><path d="m1 5 4-4 4 4" fill="none" stroke="#222" stroke-width="1.300"/></svg>
    <svg class="y2" width="17" height="13" viewBox="0 0 17 13"><path d="M4 11.500Q-.5 10 1 6.500q1-2 4-2 2-4 6-3 3 1 3 4 3 1 2 4-1 2-3 2Z" fill="#aaa" stroke="#333"/><path d="m3 10.500 6-4 5 4" fill="#eee"/></svg>
    <svg class="y3" width="17" height="17" viewBox="0 0 17 17"><path d="m8 1 7 2v6q-1 4-7 7-6-3-7-7V3Z" fill="#0870c7"/><path d="m8 1 7 2v5H1V3Z" fill="#31a5e8"/><path d="m12 7 5 9H8Z" fill="#ffc928"/><path d="M12 10v3M12 14v1" stroke="#333"/></svg>
    <svg class="y4" width="12" height="16" viewBox="0 0 12 16"><rect x="4" y="1" width="4" height="9" rx="2" fill="#f9eceb" stroke="#9c2018"/><path d="M1 7q0 6 5 6t5-6M6 13v3" fill="none" stroke="#9c2018"/></svg>
    <svg class="y5" width="17" height="12" viewBox="0 0 17 12"><rect x=".7" y=".7" width="15.500" height="10.500" rx="1.500" fill="none" stroke="#222"/><path d="M3 4h11M3 6.500h11" stroke="#222" stroke-dasharray="1 1"/><path d="M5 9h7" stroke="#222"/></svg>
    <div class="lang"><span data-w="23">ENG</span><span data-w="14">US</span></div>
    <svg class="y6" width="16" height="12" viewBox="0 0 16 12"><path d="M1 5q7-7 14 0M3.500 7q4.500-4 9 0M6 9q2-2 4 0" fill="none" stroke="#222" stroke-width="1.300"/><circle cx="8" cy="11" r="1" fill="#222"/></svg>
    <svg class="y7" width="16" height="12" viewBox="0 0 16 12"><path d="M1 4h2l4-3v10L3 8H1ZM10 4l5 5M15 4l-5 5" fill="none" stroke="#222"/></svg>
    <svg class="y8" width="17" height="14" viewBox="0 0 17 14"><path d="M6 3.500h8v8H5M15.500 6v3" fill="none" stroke="#222" stroke-width="1.500"/><path d="M0 9Q0 1 7 1q2 8-4 10L1 13Z" fill="#222"/><path d="M8 5h4v5H7Z" fill="#222"/></svg>
    <div class="clock"><span data-w="28">22:42</span><span data-w="62">20-11-2023</span></div>
    <svg class="bell" width="14" height="16" viewBox="0 0 14 16"><path d="M1 12q2-1 2-6 0-5 4-5t4 5q0 5 2 6ZM5 13h4q-1 3-2 3t-2-3" fill="#9b210c"/></svg>
  </div>
</footer>
</div>
<script src="fit.js"></script>
</body>
</html>
```
FILE: styles.css
```css
* { box-sizing: border-box; }
body { margin: 0; background: #fff; color: #444; font: 10.500px/12px "Noto Sans", "Open Sans", sans-serif; overflow: hidden; }
p { margin: 0; }
svg { display: block; flex: none; overflow: visible; }
.defs { position: absolute; }
[data-w] { display: inline-block; white-space: nowrap; }
.app { width: 1280px; height: 720px; display: flex; flex-direction: column; }
.d { width: 8px; height: 5px; color: #777; }
.flip { transform: scaleX(-1); }
.crisp { shape-rendering: crispEdges; }

/* Title and ribbon tabs */
.head { height: 51px; flex: none; display: flex; }
.logo { width: 71px; padding: 3px 0 0 4px; border-bottom: 1px solid #c6c6c6; }
.logo svg { width: 38px; height: 38px; padding: 6px; border: 1.5px solid #3d5c90; border-radius: 4px; }
.headmain { flex: 1; display: flex; flex-direction: column; }
.titlebar { height: 27px; display: flex; align-items: center; }
.quick { width: 484px; height: 26px; display: flex; align-items: center; }
.quick i { width: 1px; height: 22px; background: #e3e3e3; }
.q { display: flex; align-items: center; justify-content: center; color: #333; }
.q svg { width: 11px; height: 11px; }
.q svg.s10 { width: 9px; height: 8px; }
.q svg.d { width: 8px; height: 5px; color: #444; }
.q svg.pale { color: #aaa; }
.w5 { width: 5px; } .w10 { width: 11px; } .w12 { width: 13px; } .w14 { width: 14px; } .w14b { width: 7px; } .w15 { width: 15px; } .w16 { width: 16px; } .w19 { width: 19px; } .w20 { width: 19px; } .w21 { width: 18px; } .w24 { width: 24px; } .w26 { width: 26px; } .w29 { width: 28px; }
.q.w14b { margin: 0 7px 0 0; }
.title { flex: 1; color: #949494; }
.winbtns { display: flex; align-items: center; gap: 20px; color: #aaa; margin: 4px 10px 0 0; }
.winbtns svg { width: 10px; height: 10px; }
.winbtns .min { width: 9px; height: 1.500px; background: #aaa; }
.tabs { height: 24px; display: flex; border-bottom: 1px solid #c6c6c6; }
.tab { display: flex; justify-content: center; align-items: center; padding-top: 1px; }
.home { width: 56px; height: 24px; border: 1px solid #c6c6c6; border-bottom-color: #fff; color: #3d5f9d; padding: 0; }
.t2 { width: 76px; } .t3 { width: 68px; } .t4 { width: 63px; } .t5 { width: 51px; } .t6 { width: 55px; } .t7 { width: 111px; }
.brand { width: 76px; margin-left: 489.500px; font: bold 15.500px/22px "Noto Sans", sans-serif; color: #129c92; }
.docbtns { margin-left: 57.500px; display: flex; align-items: center; gap: 9px; color: #222; }
.docbtns svg { width: 12px; height: 12px; }
.docbtns svg.s8 { width: 9px; height: 8px; }
.docbtns .min { width: 6px; height: 1.500px; background: #222; margin-top: 6px; }
.help { width: 10px; height: 11px; background: #254e96; color: #fff; font: bold 10px/11px "Liberation Sans", sans-serif; text-align: center; }

/* Ribbon */
.ribbon { height: 88px; flex: none; display: flex; padding-top: 4px; border-bottom: 2px solid #dcdcdc; }
.grp { height: 77px; border-right: 1.500px solid #dcdcdc; display: flex; flex-direction: column; }
.grp .body { height: 63px; display: flex; }
.grp label { color: #858585; text-align: center; margin-top: 1px; }
.clip { width: 77px; } .sel { width: 73px; } .views { width: 296px; } .tables { width: 179px; } .dims { width: 208px; } .anno { width: 152px; } .ptext { width: 84px; } .edges { width: 32px; } .orient { width: 44px; } .assist { width: 53px; }
.big { display: flex; flex-direction: column; align-items: center; padding-top: 2px; flex: none; }
.big > svg:first-child { height: 33px; }
.big > svg + span { margin-top: 2px; }
.big > span { line-height: 12px; }
.big .d { margin-top: 3px; }
.big b { font-weight: normal; display: flex; align-items: center; gap: 2px; height: 12px; }
.big b .d { margin: 0; width: 7px; }
.w56 { width: 50px; padding-left: 6px; } .w46 { width: 46px; margin-left: 4px; } .w46u { width: 37px; margin-right: 3px; } .w49 { width: 46px; } .w43 { width: 42.500px; } .w41 { width: 42px; } .w61 { width: 61px; margin-left: 3px; margin-right: -3px; }
.picked { width: 42px; margin-left: 5px; background: #c3d3ee; height: 62px; }
.col { width: 20.300px; display: flex; flex-direction: column; align-items: center; flex: none; }
.col > svg, .col > u { width: 12px; height: 12px; margin: 4px 0 4.300px; flex: none; }
.col > svg.d { width: 7px; height: 5px; margin: 8px 0; }
.col em { width: 20px; height: 20px; background: #c3d3ee; display: flex; align-items: center; justify-content: center; }
.col em svg { width: 12px; height: 12px; }
.arrows { width: 12px; }
.in { width: 1px; height: 62px; background: #dcdcdc; margin: 0 2px; flex: none; }
.faint { background: #eee; }
.rows p { display: flex; align-items: center; gap: 1.500px; height: 20.200px; }
.rows svg { width: 11.500px; height: 11.500px; }
.r1 { width: 59px; margin-left: 2px; flex: none; } .r2 { padding-left: 4px; }
.off { color: #b0b0b0; }
.tables { padding-left: 5px; } .tables label { margin-left: -5px; }
.dims .last { margin-left: 1px; }
.anno { padding-left: 6px; } .anno .arrows { width: 13px; } .anno .last { width: 22px; }
.ptext { padding-left: 9px; } .ptext label { margin-left: -5px; }
.edges { padding-left: 5.500px; } .edges label { margin-left: -6px; }
.orient .body, .assist .body { justify-content: center; }
.orient .big > svg:first-child, .assist .big > svg:first-child { height: 12px; margin: 5px 0 17px; }
.orient .big > svg + span, .assist .big > svg + span { margin-top: 1px; }

/* User toolbar */
.quickbar { height: 24px; flex: none; padding-left: 439px; }
.qb { width: 683px; height: 24px; border: 1px solid #e2e2e2; border-top: 0; display: flex; align-items: center; white-space: nowrap; }
.qb p { display: flex; align-items: center; flex: none; }
.qb svg { width: 11px; height: 11px; }
.grip { width: 5px; height: 14px; margin: 0 7px 0 3px; background: radial-gradient(circle, #999 35%, transparent 40%) 0 0 / 3px 3px; }
.b1 { width: 40px; } .b2 { width: 41px; } .b3 { width: 43px; } .b4 { width: 46px; } .b5 { width: 90px; } .b6 { width: 102px; } .b7 { width: 38px; } .b8 { width: 47px; } .b9 { width: 120px; }

/* Groups pane */
.work { height: 489px; flex: none; display: flex; }
.pane { width: 238px; display: flex; flex-direction: column; border-right: 1px solid #d4d4d4; }
.phead { height: 19px; display: flex; align-items: center; padding: 0 0 1px 5px; gap: 2px; font-size: 11.500px; color: #5a78b0; }
.pbtn { display: flex; align-items: center; gap: 6px; margin: 0 0 0 114px; color: #222; }
.ptabs { height: 25px; width: 233px; display: flex; background: #f2f2f2; border-top: 1px solid #ddd; border-bottom: 1px solid #bbb; }
.pt { width: 28px; height: 25px; display: flex; align-items: center; justify-content: center; }
.pt.on { width: 30px; background: #fff; border: 1px solid #c8c8c8; border-top: 1.500px solid #4275b4; border-bottom: 0; }
.tree { margin-top: 3px; width: 234px; height: 441px; border: 1.500px solid #aaa; border-right-color: #ccc; display: flex; align-items: flex-start; padding: 3px 0 0 4px; gap: 4px; line-height: 11px; }
.tree svg { margin-top: 1px; }

/* Document */
.doc { width: 1042px; display: flex; flex-direction: column; }
.doctabs { height: 25px; display: flex; justify-content: space-between; align-items: flex-end; }
.dtab { width: 114px; height: 24px; margin-left: 1px; border: 1px solid #909090; border-top: 2px solid #172c8c; border-bottom: 0; display: flex; align-items: center; gap: 2px; padding: 0 0 2px 13px; color: #4b73b1; font-size: 11.500px; }
.cls { margin-left: 12px; color: #234796; }
.dnav { display: flex; align-items: center; gap: 7px; height: 25px; padding-right: 4px; color: #555; }
.canvas { position: relative; height: 421px; border-top: 1px solid #9a9aa8; border-bottom: 1px solid #111; }
.cmdbar { position: absolute; left: 0; top: -1px; width: 555px; height: 41px; background: #fff; border: 1px solid #707080; border-top: 2px solid #1d1d83; display: flex; align-items: center; padding: 0 0 0 1px; }
.cb { width: 31.500px; height: 28px; display: flex; align-items: center; justify-content: center; background: linear-gradient(#eef6fc 50%, #dcecf8 50%); border: 1px solid #a9bcd0; }
.cb.active { width: 42px; height: 33px; background: linear-gradient(#f6ba71 50%, #f09b34 51%, #ffc76c); border-color: #8a8175; }
.cb.opt { margin: 0 5px 0 6px; }
.cb.on { background: linear-gradient(#fac477 50%, #fad391 50%, #fff0a8); border-color: #b79b77; }
.cb.solo { margin: 0 4px; }
.cb.dis { background: linear-gradient(#f2f2f2 50%, #e9e9e9 50%); border-color: #d0d0d0; }
.fence { width: 19px; height: 13px; border: 1px dotted #222; }
.combo { width: 157px; height: 18px; border: 1px solid #e8e8e8; padding: 0 4px 0 3px; margin-right: 4px; display: flex; align-items: center; justify-content: space-between; color: #222; font-size: 11px; font-family: "Liberation Sans", sans-serif; }
.pair { display: flex; } .p3, .p4 { margin-left: 4px; }
.cadt { font: 300 18.500px Roboto, sans-serif; fill: #111; }
.dim { font: 300 16px Roboto, sans-serif; }
.tiny { font: 6px "Liberation Sans", sans-serif; fill: #222; }
.sheets { height: 16px; background: #c0c0c0; display: flex; }
.sn { width: 16.800px; background: #ececec; border: 1px solid #fff; border-right-color: #888; border-bottom-color: #999; display: flex; align-items: center; justify-content: center; }
.sn svg { width: 8px; height: 8px; }
.stab { width: 56px; height: 16px; background: #fff; padding-left: 8px; color: #111; font: bold 11px/17px "Liberation Sans", sans-serif; clip-path: polygon(0 0, 100% 0, 53px 100%, 6px 100%); border-bottom: 1px solid #444; }
.addtab { margin-left: -3px; }
.prompt { height: 27px; display: flex; align-items: center; padding: 4px 0 1px 5px; border-top: 1px solid #eee; box-shadow: inset 0 2px #e3e3e3; }
.pl { margin: 1px 10px 0 4px; color: #5379b1; font-size: 11.500px; }
.ptxt { width: 843px; height: 22px; border: 1px solid #aaa; border-right: 17px solid #efefef; border-bottom: 0; font-size: 12.200px; line-height: 20px; color: #222; padding-left: 1px; white-space: nowrap; flex: none; }
.pctl { display: flex; align-items: center; gap: 7px; margin-left: 9px; color: #111; }
.fa { font: bold 10px/12px "Liberation Serif", serif; } .big1 { font-size: 15px; }

/* Status strip */
.status { height: 20px; flex: none; background: #2b5596; border-top: 1px solid #111c83; display: flex; align-items: center; color: #fff; padding-left: 634px; font-size: 11px; }
.count { width: 191px; flex: none; }
.find { width: 141px; height: 18px; flex: none; background: #fff; color: #bcbcbc; font-size: 11.500px; line-height: 18px; padding-left: 4px; }
.stools { display: flex; align-items: center; padding-left: 2px; gap: 6.700px; }
.stools .slider { margin: 0 -4px 0 -3px; }
.stools svg:nth-last-child(-n+3) { margin-left: 4px; }

/* Desktop taskbar */
.taskbar { height: 48px; flex: none; background: #ededed; border-top: 1px solid #dadada; display: flex; align-items: center; color: #333; }
.win { margin: 0 14px 0 20px; }
.search { width: 218px; height: 31px; background: #fbfbfb; border: 1px solid #ddd; border-bottom-color: #bbb; border-radius: 16px; display: flex; align-items: center; padding-left: 12px; gap: 9px; font-size: 12.500px; flex: none; color: #555; }
.search span { margin-top: -1px; }
.apps { display: flex; margin-left: 3px; height: 47px; width: 400px; flex: none; align-items: center; }
.app1 { width: 44px; height: 41px; display: flex; flex-direction: column; align-items: center; justify-content: flex-end; padding: 0 0 8px; background: linear-gradient(#888, #888) 50% 38px / 5px 3px no-repeat; }
.none { background: none; }
.cur { background: linear-gradient(#e35420, #e35420) 50% 38px / 14px 3px no-repeat, #fafafa; border-radius: 4px; width: 40px; margin: 0 2px; }
.tray { display: flex; align-items: center; height: 47px; margin-left: 213px; flex: none; }
.y1 { margin-right: 20px; } .y2 { margin-right: 16px; } .y3 { margin-right: 18px; } .y4 { margin-right: 17px; } .y5 { margin-right: 18px; }
.lang { width: 24px; font-size: 11.500px; line-height: 16px; display: flex; flex-direction: column; align-items: center; margin: -2px 17px 0 0; }
.y6, .y7 { margin-right: 8px; } .y8 { margin-right: 16px; }
.clock { width: 62px; font-size: 11.500px; line-height: 16px; display: flex; flex-direction: column; align-items: flex-end; margin: -2px 9px 0 0; }
```
FILE: fit.js
```javascript
// Tracks each label so that it fills its intended width.
document.querySelectorAll('[data-w]').forEach(function (el) {
  var width = el.getBoundingClientRect().width;
  var gap = (Number(el.dataset.w) - width) / el.textContent.length;
  el.style.letterSpacing = gap.toFixed(3) + 'px';
});
```
